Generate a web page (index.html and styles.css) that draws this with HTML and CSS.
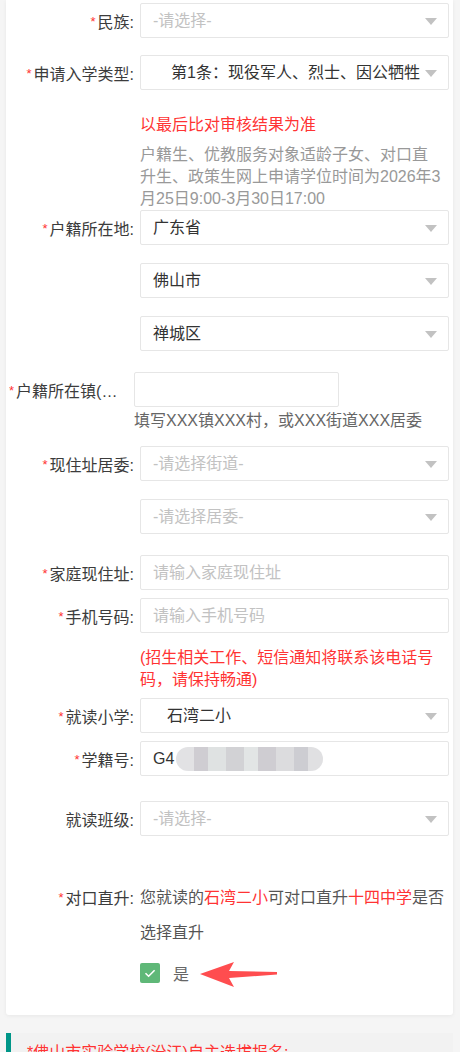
FILE: index.html
```html
<!DOCTYPE html>
<html lang="zh-CN">
<head>
  <meta charset="UTF-8">
  <title>网上报名</title>
  <link rel="stylesheet" href="styles.css">
</head>
<body>
  <div class="card">
    <div class="row">
      <label class="label"><i>*</i>民族:</label>
      <div class="select empty">-请选择-</div>
    </div>
    <div class="row mt17">
      <label class="label"><i>*</i>申请入学类型:</label>
      <div class="select indent-l">第1条：现役军人、烈士、因公牺牲</div>
    </div>
    <div class="row mt24">
      <span></span>
      <div class="note">
        <p class="red">以最后比对审核结果为准</p>
        <p class="gray">户籍生、优教服务对象适龄子女、对口直升生、政策生网上申请学位时间为2026年3月25日9:00-3月30日17:00</p>
      </div>
    </div>
    <div class="row">
      <label class="label"><i>*</i>户籍所在地:</label>
      <div class="select">广东省</div>
    </div>
    <div class="row mt18">
      <span></span>
      <div class="select">佛山市</div>
    </div>
    <div class="row mt18">
      <span></span>
      <div class="select">禅城区</div>
    </div>
    <div class="row-town">
      <label class="label-cut"><i>*</i>户籍所在镇(街道)</label>
      <input class="input" type="text">
    </div>
    <p class="town-tip">填写XXX镇XXX村，或XXX街道XXX居委</p>
    <div class="row mt14">
      <label class="label"><i>*</i>现住址居委:</label>
      <div class="select empty">-请选择街道-</div>
    </div>
    <div class="row mt18">
      <span></span>
      <div class="select empty">-请选择居委-</div>
    </div>
    <div class="row mt21">
      <label class="label"><i>*</i>家庭现住址:</label>
      <input class="input" type="text" placeholder="请输入家庭现住址">
    </div>
    <div class="row mt8">
      <label class="label"><i>*</i>手机号码:</label>
      <input class="input" type="text" placeholder="请输入手机号码">
    </div>
    <div class="row mt14">
      <span></span>
      <p class="note red">(招生相关工作、短信通知将联系该电话号码，请保持畅通)</p>
    </div>
    <div class="row mt7">
      <label class="label"><i>*</i>就读小学:</label>
      <div class="select indent-s">石湾二小</div>
    </div>
    <div class="row mt8">
      <label class="label"><i>*</i>学籍号:</label>
      <div class="input filled">G4<span class="masked"></span></div>
    </div>
    <div class="row mt25">
      <label class="label">就读班级:</label>
      <div class="select empty">-请选择-</div>
    </div>
    <div class="row row-top mt44">
      <label class="label tall"><i>*</i>对口直升:</label>
      <div>
        <p class="direct">您就读的<em>石湾二小</em>可对口直升<em>十四中学</em>是否选择直升</p>
        <div class="check">
          <span class="box">
            <svg width="20" height="20" viewBox="0 0 20 20"><path d="M5.5 10.2 L8.6 13.2 L14.6 7.2" fill="none" stroke="#fff" stroke-width="1.6"/></svg>
          </span>
          <span class="check-text">是</span>
          <svg class="arrow" width="78" height="28" viewBox="0 0 78 28"><polygon points="0,14 34,2 29,11 77,12 77,14.5 29,18 34,27" fill="#ff4d4f"/></svg>
        </div>
      </div>
    </div>
  </div>

  <div class="section">
    <p class="section-title">*佛山市实验学校(汾江)自主选拔报名:</p>
  </div>
</body>
</html>
```

FILE: styles.css
```css
* {
  box-sizing: border-box;
}
body {
  margin: 0;
  background: #f5f5f5;
  font-family: "Liberation Sans", "Noto Sans CJK SC", sans-serif;
  font-size: 16px;
  color: #333;
}
p {
  margin: 0;
}
.card {
  margin: 0 7px 0 6px;
  padding: 3px 4px 32px 0;
  background: #fff;
  border-radius: 0 0 3px 3px;
  box-shadow: 0 1px 4px rgba(0, 0, 0, 0.06);
}
.row {
  display: grid;
  grid-template-columns: 128px 309px;
  column-gap: 6px;
  align-items: center;
}
.row-top {
  align-items: start;
}
.mt7 { margin-top: 7px; }
.mt8 { margin-top: 8px; }
.mt14 { margin-top: 14px; }
.mt17 { margin-top: 17px; }
.mt18 { margin-top: 18px; }
.mt21 { margin-top: 21px; }
.mt24 { margin-top: 24px; }
.mt25 { margin-top: 25px; }
.mt44 { margin-top: 44px; }
.label {
  text-align: right;
  color: #3c3c3c;
  white-space: nowrap;
}
.label i,
.label-cut i {
  font-style: normal;
  color: #ff3333;
  font-size: 13px;
  margin-right: 2px;
  vertical-align: 2px;
}
.label.tall {
  line-height: 35px;
}
.select,
.input {
  position: relative;
  height: 35px;
  line-height: 33px;
  border: 1px solid #e6e6e6;
  border-radius: 2px;
  padding: 0 30px 0 12px;
  background: #fff;
  color: #333;
  font-family: inherit;
  font-size: 16px;
  white-space: nowrap;
  overflow: hidden;
}
.select::after {
  content: "";
  position: absolute;
  right: 11px;
  top: 14px;
  border-left: 6.5px solid transparent;
  border-right: 6.5px solid transparent;
  border-top: 7px solid #c2c2c2;
}
.select.empty {
  color: #c2c2c2;
}
.select.indent-l {
  padding-left: 30px;
}
.select.indent-s {
  padding-left: 26px;
}
.input {
  width: 100%;
  outline: none;
}
.input::placeholder {
  color: #c2c2c2;
}
.filled {
  display: flex;
  align-items: center;
}
.masked {
  display: inline-block;
  width: 147px;
  height: 24px;
  margin-left: 2px;
  border-radius: 12px;
  background:
    linear-gradient(90deg, #e2e2e4 0 12%, #cfcdd2 12% 22%, #dfe2e2 22% 34%, #d2d2d5 34% 46%, #e2e5e5 46% 56%, #cfcdd2 56% 68%, #dcdcde 68% 80%, #cdcdd2 80% 90%, #e0e0e2 90%);
}
.note {
  width: 302px;
  line-height: 22px;
}
.red {
  color: #ff3333;
}
.gray {
  margin-top: 8px;
  color: #999;
}
.row-town {
  display: grid;
  grid-template-columns: 112px 205px;
  column-gap: 13px;
  align-items: center;
  margin-top: 21px;
  padding-left: 3px;
}
.label-cut {
  color: #3c3c3c;
  white-space: nowrap;
  overflow: hidden;
  text-overflow: ellipsis;
}
.row-town .input {
  padding-left: 12px;
}
.town-tip {
  margin: 3px 0 0 128px;
  line-height: 22px;
  color: #666;
}
.direct {
  line-height: 35px;
  color: #555;
}
.direct em {
  font-style: normal;
  color: #ff3333;
}
.check {
  display: flex;
  align-items: center;
  margin-top: 13px;
  height: 20px;
}
.box {
  width: 20px;
  height: 20px;
  border-radius: 2px;
  background: #5fb878;
}
.box svg {
  display: block;
}
.check-text {
  margin-left: 13px;
  color: #666;
}
.arrow {
  margin-left: 11px;
  margin-top: 2px;
}
.section {
  margin: 18px 7px 0 6px;
  padding: 9px 0 10px 16px;
  border-left: 5px solid #009688;
  background: #f2f2f2;
}
.section-title {
  color: #ff3333;
  line-height: 22px;
}
```
